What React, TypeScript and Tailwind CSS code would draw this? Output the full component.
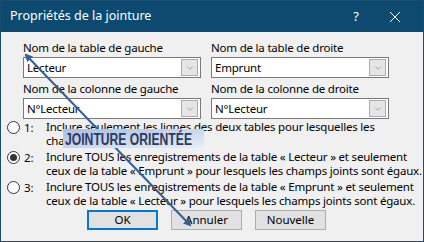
import { ChevronDown } from 'lucide-react';

const font = { fontFamily: '"Noto Sans", "Open Sans", sans-serif' };

function Combo({ value }: { value: string }) {
  return (
    <div className="flex h-[21px] items-center justify-between border border-[#7a7a7a] bg-white pl-[3px] pr-[2px]">
      <span className="text-[11.5px] leading-none tracking-[-0.2px] text-black">{value}</span>
      <span className="flex h-[17px] w-[17px] items-center justify-center border border-[#adadad] bg-[#e5e5e5]">
        <ChevronDown size={10} strokeWidth={1.2} className="text-[#606060]" />
      </span>
    </div>
  );
}

function Field({ label, value }: { label: string; value: string }) {
  return (
    <div className="flex flex-col">
      <span className="mb-[2px] whitespace-nowrap text-[11.5px] leading-[14px] tracking-[-0.2px] text-black">{label}</span>
      <Combo value={value} />
    </div>
  );
}

function Radio({ n, checked, lines }: { n: number; checked?: boolean; lines: string[] }) {
  return (
    <div className="flex items-start">
      <span className="mt-[1px] flex h-[13px] w-[13px] shrink-0 items-center justify-center rounded-full border border-[#333] bg-white">
        {checked && <span className="h-[7px] w-[7px] rounded-full bg-[#333]" />}
      </span>
      <span className="ml-[4px] w-[22px] shrink-0 text-[11.5px] leading-[15px]">{n}:</span>
      <div className="flex flex-col text-[11.5px] leading-[14px] tracking-[-0.2px] text-black">
        {lines.map((l, i) => (
          <span key={i} className="whitespace-nowrap">{l}</span>
        ))}
      </div>
    </div>
  );
}

export default function App() {
  return (
    <div className="relative h-[242px] w-[424px] overflow-hidden border border-[#1b4c72] bg-[#f0f0f0]" style={font}>
      {/* barre de titre */}
      <div className="flex h-[31px] items-center justify-between bg-[#0d4a6f] pl-[9px] text-white">
        <span className="text-[12.5px]">Propriétés de la jointure</span>
        <div className="flex items-center">
          <span className="mr-[30px] text-[13px]">?</span>
          <svg width="12" height="12" viewBox="0 0 12 12" className="mr-[22px]">
            <path d="M1 1 L11 11 M11 1 L1 11" stroke="white" strokeWidth="1" />
          </svg>
        </div>
      </div>

      <div className="pl-[22px] pr-[34px] pt-[9px]">
        <div className="grid grid-cols-2 gap-x-[10px] gap-y-[4px]">
          <Field label="Nom de la table de gauche" value="Lecteur" />
          <Field label="Nom de la table de droite" value="Emprunt" />
          <Field label="Nom de la colonne de gauche" value="N°Lecteur" />
          <Field label="Nom de la colonne de droite" value="N°Lecteur" />
        </div>
      </div>

      <div className="mt-[1px] flex flex-col gap-[2px] pl-[6px]">
        <Radio n={1} lines={['Inclure seulement les lignes des deux tables pour lesquelles les', 'champs joints sont égaux.']} />
        <Radio n={2} checked lines={['Inclure TOUS les enregistrements de la table « Lecteur » et seulement', 'ceux de la table « Emprunt » pour lesquels les champs joints sont égaux.']} />
        <Radio n={3} lines={['Inclure TOUS les enregistrements de la table « Emprunt » et seulement', 'ceux de la table « Lecteur » pour lesquels les champs joints sont égaux.']} />
      </div>

      <div className="mt-[2px] flex gap-[13px] pl-[86px]">
        <button className="h-[20px] w-[71px] border-2 border-[#0078d7] bg-[#e1e1e1] text-[11.5px] leading-none">OK</button>
        <button className="h-[20px] w-[71px] border border-[#adadad] bg-[#e1e1e1] text-[11.5px] leading-none">Annuler</button>
        <button className="h-[20px] w-[71px] border border-[#adadad] bg-[#e1e1e1] text-[11.5px] leading-none">Nouvelle</button>
      </div>

      {/* annotation */}
      <svg className="pointer-events-none absolute left-0 top-0" width="424" height="242">
        <defs>
          <marker id="ah" markerWidth="8" markerHeight="8" refX="6" refY="4" orient="auto-start-reverse" markerUnits="userSpaceOnUse">
            <path d="M0 0 L8 4 L0 8 Z" fill="#35608f" />
          </marker>
        </defs>
        <line x1="25" y1="54" x2="189" y2="224" stroke="#35608f" strokeWidth="2" markerStart="url(#ah)" markerEnd="url(#ah)" />
      </svg>
      <div className="absolute left-[62px] top-[128px] flex h-[19px] w-[141px] items-center whitespace-nowrap bg-gradient-to-br from-[#a9bde6] to-[#e8eef9] pl-[2px]">
        <span
          className="mt-[2px] inline-block origin-left scale-x-[0.76] text-[16px] font-bold leading-none text-[#2b3a58]"
          style={{ fontFamily: '"Liberation Sans", Arial, sans-serif' }}
        >
          JOINTURE ORIENTÉE
        </span>
      </div>
    </div>
  );
}
